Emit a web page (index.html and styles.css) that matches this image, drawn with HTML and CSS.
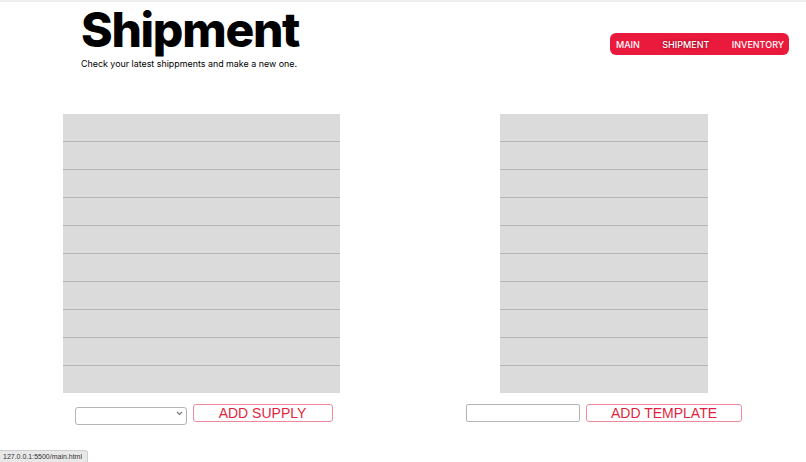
FILE: index.html
```html
<!DOCTYPE html>
<html lang="en">
<head>
<meta charset="utf-8">
<title>Shipment</title>
<link rel="stylesheet" href="styles.css">
</head>
<body>
<header class="header">
  <div class="brand">
    <h1 class="title">Shipment</h1>
    <p class="subtitle">Check your latest shippments and make a new one.</p>
  </div>
  <nav class="nav">
    <a class="nav-link" href="#">MAIN</a>
    <a class="nav-link active" href="#">SHIPMENT</a>
    <a class="nav-link" href="#">INVENTORY</a>
  </nav>
</header>
<main class="panels">
  <section class="panel">
    <ul class="list list-wide">
      <li></li><li></li><li></li><li></li><li></li>
      <li></li><li></li><li></li><li></li><li></li>
    </ul>
    <div class="controls controls-left">
      <div class="select-box">
        <select class="select"><option></option></select>
        <svg class="chev" width="7" height="5" viewBox="0 0 7 5"><path d="M1 1l2.5 2.5L6 1" fill="none" stroke="#777" stroke-width="1.1"/></svg>
      </div>
      <button class="btn btn-supply">ADD SUPPLY</button>
    </div>
  </section>
  <section class="panel">
    <ul class="list list-narrow">
      <li></li><li></li><li></li><li></li><li></li>
      <li></li><li></li><li></li><li></li><li></li>
    </ul>
    <div class="controls controls-right">
      <input class="text-input" type="text">
      <button class="btn btn-template">ADD TEMPLATE</button>
    </div>
  </section>
</main>
<div class="status">127.0.0.1:5500/main.html</div>
</body>
</html>
```

FILE: styles.css
```css
* { box-sizing: border-box; }
html, body { margin: 0; padding: 0; }
body {
  background: #fff;
  font-family: Inter, "Liberation Sans", sans-serif;
  color: #000;
  border-top: 2px solid #eeeeee;
  height: 462px;
  overflow: hidden;
}
.header {
  display: flex;
  justify-content: space-between;
  align-items: flex-start;
  padding: 0 17px 0 81px;
}
.title {
  margin: -1.25px 0 0 0;
  font-size: 48px;
  line-height: 58.2px;
  font-weight: 800;
  letter-spacing: -1.3px;
}
.subtitle {
  margin: 0;
  font-size: 8.9px;
  line-height: 10.8px;
  font-weight: 400;
}
.nav {
  margin-top: 31px;
  display: flex;
  align-items: center;
  background: #ea1a3d;
  border-radius: 6px;
  height: 22px;
  padding: 0 5px 0 6px;
  width: 179px;
  justify-content: space-between;
}
.nav-link {
  color: #fff;
  text-decoration: none;
  font-size: 9px;
  font-weight: 500;
}
.nav-link.active {
  text-shadow: 0 0 3px rgba(110, 0, 20, 0.9);
}
.panels {
  display: grid;
  grid-template-columns: 403px 403px;
  margin-top: 44.25px;
}
.panel {
  display: flex;
  flex-direction: column;
  align-items: center;
}
.list {
  list-style: none;
  margin: 0;
  padding: 0;
  background: #dbdbdb;
}
.list-wide { width: 277px; }
.list-narrow { width: 208px; margin-left: -1px; }
.list li {
  height: 28px;
  border-top: 1.5px solid #b5b5b5;
}
.list li:first-child { border-top: none; height: 27px; }
.controls {
  display: flex;
  gap: 6px;
  margin-top: 11px;
}
.controls-left { margin-left: 4px; }
.controls-right { margin-left: -1px; }
.select-box {
  position: relative;
  width: 112px;
  height: 18px;
}
.select {
  appearance: none;
  -webkit-appearance: none;
  width: 100%;
  height: 100%;
  background: #fff;
  border: 1px solid #b4b4b4;
  border-radius: 3px;
}
.chev {
  position: absolute;
  right: 4px;
  top: 7px;
}
.text-input {
  width: 114px;
  height: 18px;
  border: 1px solid #b4b4b4;
  border-radius: 2px;
  background: #fff;
}
.btn {
  height: 18px;
  background: #fff;
  border: 1px solid #f0899b;
  border-radius: 3px;
  color: #e21f3e;
  font-family: "Liberation Sans", Arial, sans-serif;
  font-size: 14px;
  line-height: 16px;
  padding: 0;
}
.btn-supply { width: 140px; }
.btn-template { width: 156px; }
.status {
  position: fixed;
  left: 0;
  bottom: 0;
  width: 88px;
  height: 12px;
  background: #e8e8e8;
  border: 1px solid #cfcfcf;
  border-left: none;
  border-bottom: none;
  border-top-right-radius: 3px;
  font-family: "Liberation Sans", Arial, sans-serif;
  font-size: 7px;
  line-height: 11px;
  color: #333;
  padding-left: 3px;
}
```
